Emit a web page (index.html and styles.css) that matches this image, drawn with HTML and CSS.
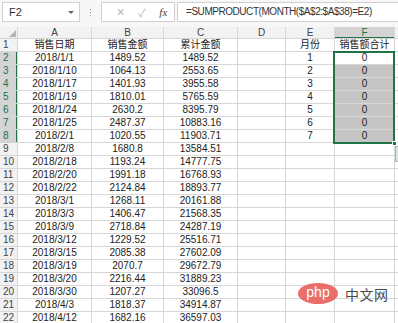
FILE: index.html
```html
<!DOCTYPE html>
<html lang="zh-CN">

<head>
    <meta charset="UTF-8">
    <meta name="viewport" content="width=device-width, initial-scale=1.0">
    <title>SUMPRODUCT</title>
    <link rel="stylesheet" href="styles.css">
</head>

<body>
    <header class="bar">
        <div class="namebox">
            <span>F2</span>
            <i class="caret"></i>
        </div>
        <div class="grip"><i></i><i></i><i></i></div>
        <div class="btns">
            <span class="btn x">✕</span>
            <span class="btn ok">✓</span>
            <span class="btn fx">fx</span>
        </div>
        <div class="formula">=SUMPRODUCT(MONTH($A$2:$A$38)=E2)</div>
    </header>

    <main class="sheet">
        <div class="row head">
            <div class="corner"><i></i></div>
            <div>A</div><div>B</div><div>C</div><div>D</div><div>E</div><div class="on">F</div><div></div>
        </div>
        <div class="row"><div class="rh">1</div><div>销售日期</div><div>销售金额</div><div>累计金额</div><div></div><div>月份</div><div>销售额合计</div><div></div></div>
        <div class="row"><div class="rh on">2</div><div>2018/1/1</div><div>1489.52</div><div>1489.52</div><div></div><div>1</div><div>0</div><div></div></div>
        <div class="row"><div class="rh on">3</div><div>2018/1/10</div><div>1064.13</div><div>2553.65</div><div></div><div>2</div><div class="sel">0</div><div></div></div>
        <div class="row"><div class="rh on">4</div><div>2018/1/17</div><div>1401.93</div><div>3955.58</div><div></div><div>3</div><div class="sel">0</div><div></div></div>
        <div class="row"><div class="rh on">5</div><div>2018/1/19</div><div>1810.01</div><div>5765.59</div><div></div><div>4</div><div class="sel">0</div><div></div></div>
        <div class="row"><div class="rh on">6</div><div>2018/1/24</div><div>2630.2</div><div>8395.79</div><div></div><div>5</div><div class="sel">0</div><div></div></div>
        <div class="row"><div class="rh on">7</div><div>2018/1/25</div><div>2487.37</div><div>10883.16</div><div></div><div>6</div><div class="sel">0</div><div></div></div>
        <div class="row"><div class="rh on">8</div><div>2018/2/1</div><div>1020.55</div><div>11903.71</div><div></div><div>7</div><div class="sel">0</div><div></div></div>
        <div class="row"><div class="rh">9</div><div>2018/2/8</div><div>1680.8</div><div>13584.51</div><div></div><div></div><div></div><div></div></div>
        <div class="row"><div class="rh">10</div><div>2018/2/18</div><div>1193.24</div><div>14777.75</div><div></div><div></div><div></div><div></div></div>
        <div class="row"><div class="rh">11</div><div>2018/2/20</div><div>1991.18</div><div>16768.93</div><div></div><div></div><div></div><div></div></div>
        <div class="row"><div class="rh">12</div><div>2018/2/22</div><div>2124.84</div><div>18893.77</div><div></div><div></div><div></div><div></div></div>
        <div class="row"><div class="rh">13</div><div>2018/3/1</div><div>1268.11</div><div>20161.88</div><div></div><div></div><div></div><div></div></div>
        <div class="row"><div class="rh">14</div><div>2018/3/3</div><div>1406.47</div><div>21568.35</div><div></div><div></div><div></div><div></div></div>
        <div class="row"><div class="rh">15</div><div>2018/3/9</div><div>2718.84</div><div>24287.19</div><div></div><div></div><div></div><div></div></div>
        <div class="row"><div class="rh">16</div><div>2018/3/12</div><div>1229.52</div><div>25516.71</div><div></div><div></div><div></div><div></div></div>
        <div class="row"><div class="rh">17</div><div>2018/3/15</div><div>2085.38</div><div>27602.09</div><div></div><div></div><div></div><div></div></div>
        <div class="row"><div class="rh">18</div><div>2018/3/19</div><div>2070.7</div><div>29672.79</div><div></div><div></div><div></div><div></div></div>
        <div class="row"><div class="rh">19</div><div>2018/3/20</div><div>2216.44</div><div>31889.23</div><div></div><div></div><div></div><div></div></div>
        <div class="row"><div class="rh">20</div><div>2018/3/30</div><div>1207.27</div><div>33096.5</div><div></div><div></div><div></div><div></div></div>
        <div class="row"><div class="rh">21</div><div>2018/4/3</div><div>1818.37</div><div>34914.87</div><div></div><div></div><div></div><div></div></div>
        <div class="row"><div class="rh">22</div><div>2018/4/12</div><div>1682.16</div><div>36597.03</div><div></div><div></div><div></div><div></div></div>

        <!-- 选区框 F2:F8 -->
        <div class="selection"><i class="handle"></i></div>
        <div class="quick"></div>
    </main>

    <div class="mark">
        <span class="logo">php</span>
        <span class="cn">中文网</span>
    </div>
</body>

</html>
```
FILE: styles.css
```css
* {
    padding: 0;
    margin: 0;
    box-sizing: border-box;
}

body {
    width: 398px;
    height: 323px;
    overflow: hidden;
    background: #fff;
    font-family: "Liberation Sans", "Noto Sans CJK SC", sans-serif;
    font-size: 10px;
    color: #222;
    position: relative;
}

/* 顶部编辑栏 */
.bar {
    display: flex;
    align-items: flex-start;
    height: 27px;
    padding: 2px 0 0 2px;
    background: #f7f7f7;
}

.namebox {
    display: flex;
    align-items: center;
    justify-content: space-between;
    width: 78px;
    height: 20px;
    padding: 0 5px 0 6px;
    background: #fff;
    border: 1px solid #d0d0d0;
    font-size: 11px;
    color: #333;
}

.caret {
    width: 0;
    height: 0;
    border-left: 3px solid transparent;
    border-right: 3px solid transparent;
    border-top: 3px solid #666;
}

.grip {
    width: 21px;
    height: 20px;
    display: flex;
    flex-direction: column;
    align-items: center;
    justify-content: center;
    gap: 2px;
}

.grip i {
    width: 1px;
    height: 1px;
    background: #999;
}

.btns {
    display: flex;
    align-items: center;
    width: 74px;
    height: 20px;
    padding-left: 8px;
    background: #fff;
    border: 1px solid #d0d0d0;
}

.btn {
    width: 24px;
    text-align: center;
    color: #b8b8b8;
    font-size: 11px;
}

.btn.fx {
    color: #444;
    font-family: "Liberation Serif", serif;
    font-style: italic;
    font-size: 11px;
}

.formula {
    flex: 1;
    height: 20px;
    margin-left: 2px;
    padding-left: 8px;
    line-height: 18px;
    background: #fff;
    border: 1px solid #d0d0d0;
    border-right: 0;
    font-size: 10px;
    letter-spacing: -0.45px;
    color: #333;
    white-space: nowrap;
}

/* 表格 */
.sheet {
    position: relative;
    display: flex;
    flex-direction: column;
    gap: 1px;
    background: #d6d6d6;
}

.row {
    display: grid;
    grid-template-columns: 17px 73px 71px 73px 47px 48px 59px 1fr;
    gap: 1px;
    height: 12px;
}

.row div {
    background: #fff;
    text-align: center;
    line-height: 12px;
    white-space: nowrap;
    overflow: hidden;
}

.row.head {
    height: 11px;
}

.row.head div {
    background: #f2f2f2;
    line-height: 11px;
    color: #444;
}

.row.head .on {
    background: #d4d4d4;
    color: #217346;
    box-shadow: inset 0 -1px 0 #217346;
}

.corner {
    position: relative;
}

.corner i {
    position: absolute;
    right: 1px;
    bottom: 1px;
    border-left: 7px solid transparent;
    border-bottom: 7px solid #b4b4b4;
}

.row .rh {
    background: #f2f2f2;
    color: #444;
    text-align: left;
    padding-left: 3px;
}

.row .rh.on {
    background: #d4d4d4;
    color: #217346;
    box-shadow: inset -1px 0 0 #217346;
}

.row .sel {
    background: #c6c6c6;
}

.selection {
    position: absolute;
    left: 333px;
    top: 24px;
    width: 62px;
    height: 93px;
    border: 2px solid #217346;
}

.handle {
    position: absolute;
    right: -4px;
    bottom: -4px;
    width: 5px;
    height: 5px;
    background: #217346;
    border: 1px solid #fff;
}

.quick {
    position: absolute;
    left: 395px;
    top: 119px;
    width: 6px;
    height: 16px;
    background: #d8e6dc;
    border: 1px solid #9dbfa8;
}

/* 水印 */
.mark {
    position: absolute;
    left: 298px;
    top: 283px;
    display: flex;
    align-items: center;
    gap: 7px;
}

.logo {
    width: 40px;
    height: 21px;
    border-radius: 50%;
    background: #e8605c;
    color: #fff;
    font-size: 14px;
    line-height: 19px;
    text-align: center;
    opacity: 0.9;
}

.cn {
    font-family: "Noto Sans CJK SC", sans-serif;
    font-size: 14px;
    color: #4a4a4a;
    letter-spacing: 0.5px;
}
```
